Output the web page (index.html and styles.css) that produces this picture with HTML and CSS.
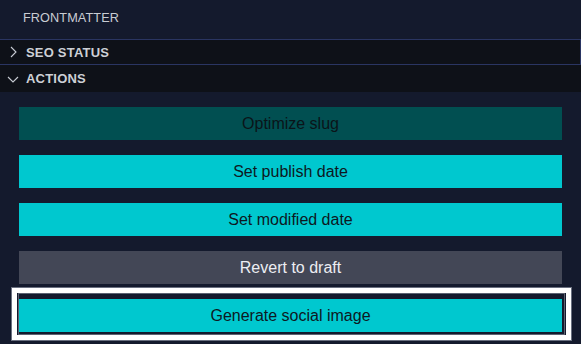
FILE: index.html
```html
<!DOCTYPE html>
<html lang="en">
<head>
  <meta charset="UTF-8" />
  <title>Front Matter</title>
  <link rel="stylesheet" href="styles.css">
</head>
<body>
  <div class="panel">
    <div class="title">FRONTMATTER</div>

    <div class="section-head seo">
      <svg class="chev" width="16" height="16" viewBox="0 0 16 16"><path d="M6 3l5 5-5 5" fill="none" stroke="#c8ccd4" stroke-width="1.1"/></svg>
      <span>SEO STATUS</span>
    </div>

    <div class="section-head">
      <svg class="chev" width="16" height="16" viewBox="0 0 16 16"><path d="M3 6l5 5 5-5" fill="none" stroke="#c8ccd4" stroke-width="1.1"/></svg>
      <span>ACTIONS</span>
    </div>

    <div class="actions">
      <button class="btn btn-dim">Optimize slug</button>
      <button class="btn">Set publish date</button>
      <button class="btn">Set modified date</button>
      <button class="btn btn-grey">Revert to draft</button>
      <div class="focus">
        <div class="focus-inner">
          <button class="btn btn-last">Generate social image</button>
        </div>
      </div>
    </div>
  </div>
</body>
</html>
```

FILE: styles.css
```css
body {
  margin: 0;
  background-color: #141a2d;
  font-family: "Liberation Sans", Arial, sans-serif;
  overflow: hidden;
}
.panel {
  width: 581px;
  height: 344px;
  background-color: #141a2d;
}
.title {
  height: 39px;
  line-height: 36px;
  padding-left: 23px;
  font-size: 12.7px;
  color: #c9ccd3;
  letter-spacing: 0.1px;
}
.section-head {
  display: flex;
  align-items: center;
  height: 27px;
  background-color: #0e1118;
  color: #cdd0d6;
  font-size: 13px;
  font-weight: bold;
  letter-spacing: 0.2px;
}
.section-head.seo {
  height: 24px;
  border-top: 1px solid #2a3562;
  border-bottom: 1px solid #2a3562;
  border-right: 1px solid #2a3562;
}
.chev {
  margin: 0 5px 0 5px;
  flex: none;
}
.actions {
  padding: 15px 0 0 0;
}
.btn {
  display: block;
  width: 543px;
  height: 33px;
  margin: 0 0 15px 19px;
  padding: 0;
  border: none;
  background-color: #00c8cf;
  color: #0d1822;
  font-family: "Liberation Sans", Arial, sans-serif;
  font-size: 16px;
}
.btn-dim {
  background-color: #014f51;
  color: #0a1419;
}
.btn-grey {
  background-color: #434756;
  color: #ecedf2;
  margin-bottom: 4px;
}
.focus {
  width: 549px;
  margin-left: 12px;
  border: 5px solid #fff;
  box-shadow: 0 0 0 1px #6a7080;
}
.focus-inner {
  margin-left: 1px;
  width: 545px;
  padding: 5px 0 2px 0;
  border: 1px solid #5d6373;
}
.btn-last {
  margin: 0;
}
```
